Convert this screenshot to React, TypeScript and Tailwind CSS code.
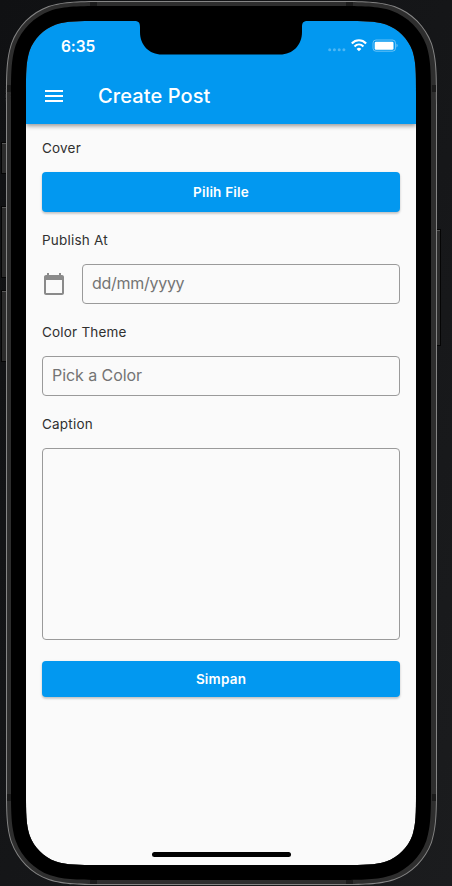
import type { ReactNode } from 'react';

/** Rounded rectangle with continuous (iOS style) corners. */
function squircle(x: number, y: number, w: number, h: number, r: number): string {
  const R = x + w;
  const B = y + h;
  const a = 1.528665 * r;
  const b = 1.088493 * r;
  const c = 0.868407 * r;
  const d = 0.631494 * r;
  const e = 0.074911 * r;
  const f = 0.372824 * r;
  const g = 0.169059 * r;
  return [
    `M${x + a} ${y}H${R - a}`,
    `C${R - b} ${y} ${R - c} ${y} ${R - d} ${y + e}`,
    `C${R - f} ${y + g} ${R - g} ${y + f} ${R - e} ${y + d}`,
    `C${R} ${y + c} ${R} ${y + b} ${R} ${y + a}`,
    `V${B - a}`,
    `C${R} ${B - b} ${R} ${B - c} ${R - e} ${B - d}`,
    `C${R - g} ${B - f} ${R - f} ${B - g} ${R - d} ${B - e}`,
    `C${R - c} ${B} ${R - b} ${B} ${R - a} ${B}`,
    `H${x + a}`,
    `C${x + b} ${B} ${x + c} ${B} ${x + d} ${B - e}`,
    `C${x + f} ${B - g} ${x + g} ${B - f} ${x + e} ${B - d}`,
    `C${x} ${B - c} ${x} ${B - b} ${x} ${B - a}`,
    `V${y + a}`,
    `C${x} ${y + b} ${x} ${y + c} ${x + e} ${y + d}`,
    `C${x + g} ${y + f} ${x + f} ${y + g} ${x + d} ${y + e}`,
    `C${x + c} ${y} ${x + b} ${y} ${x + a} ${y}Z`,
  ].join('');
}

const SCREEN = squircle(26, 21, 390, 844, 47.3);
const GLASS = squircle(11, 6, 420, 874, 62.3);
const RIM = squircle(7, 2, 429, 882, 66.3);
const EDGE = squircle(6, 1, 431, 884, 67.3);

function DeviceFrame() {
  return (
    <svg className="pointer-events-none absolute inset-0" width="452" height="886" viewBox="0 0 452 886" aria-hidden="true">
      <g fill="#2b2b2b" stroke="#050505" strokeWidth="1">
        <rect x="1.5" y="142.5" width="6" height="31" />
        <rect x="1.5" y="206.5" width="6" height="71" />
        <rect x="1.5" y="290.5" width="6" height="71" />
        <rect x="435.5" y="229.5" width="5" height="116" />
      </g>
      <path d="M2 143.5H6M2 207.5H6M2 291.5H6M437 230.5H440" stroke="#555" />
      <path d={EDGE + SCREEN} fill="#858585" fillRule="evenodd" />
      <path d={RIM + SCREEN} fill="#2e2e2e" fillRule="evenodd" />
      <path d="M90 2h7v4h-7zM346 2h7v4h-7zM90 880h7v4h-7zM346 880h7v4h-7zM7 85h4v7H7zM432 85h4v7h-4zM7 794h4v7H7zM432 794h4v7h-4z" fill="#1b1b1b" />
      <path d={GLASS + SCREEN} fill="#000" fillRule="evenodd" />
      <path d="M134 20.500V21C138.500 21 140 22.500 140 27V32C140 45 149 54.500 162 54.500H280C293 54.500 302 45 302 32V27C302 22.500 303.500 21 308 21V20.500Z" fill="#000" />
    </svg>
  );
}

function StatusBar() {
  return (
    <div className="flex h-[47px] items-start justify-between pl-[35px] pr-[18px]">
      <span className="mt-[16px] text-[15.500px] leading-5 font-semibold tracking-[-0.100px]">6:35</span>
      <div className="mt-[17px] flex items-center">
        <svg width="18" height="16" viewBox="0 0 18 16" fill="#fff" fillOpacity="0.3">
          <circle cx="1.700" cy="11.700" r="1.500" />
          <circle cx="6.400" cy="11.700" r="1.500" />
          <circle cx="11.200" cy="11.700" r="1.500" />
          <circle cx="15.900" cy="11.700" r="1.500" />
        </svg>
        <svg className="ml-[5px]" width="17" height="16" viewBox="0 0 17 16" fill="none" stroke="#fff">
          <path d="M0.800 5.400C4.900 1.200 11 1.200 15.100 5.400" strokeWidth="2.200" />
          <path d="M3.500 8.400C6.100 5.800 9.800 5.800 12.400 8.400" strokeWidth="2.100" />
          <path d="M7.950 13.300L5.600 10.900C7 9.500 8.900 9.500 10.300 10.900Z" fill="#fff" stroke="none" />
        </svg>
        <svg className="ml-[4px]" width="26" height="16" viewBox="0 0 26 16">
          <rect x="1" y="2" width="22.500" height="11.200" rx="3" fill="none" stroke="#fff" strokeOpacity="0.4" />
          <rect x="2.700" y="3.700" width="18.800" height="8" rx="1.300" fill="#fff" />
          <path d="M24.500 5.800C26 6.400 26 8.800 24.500 9.400Z" fill="#fff" fillOpacity="0.45" />
        </svg>
      </div>
    </div>
  );
}

function Label({ children }: { children: ReactNode }) {
  return <label className="block h-4 text-[13.500px] leading-4 tracking-[0.200px] text-[#303030]">{children}</label>;
}

const BUTTON =
  'flex w-full items-center justify-center rounded-[4px] bg-[#0298f0] text-[13.500px] font-semibold tracking-[0.200px] text-white shadow-[0_2px_2px_rgba(0,0,0,0.12),0_1px_3px_rgba(0,0,0,0.14)]';
const FIELD =
  'block w-full min-w-0 rounded-[4px] border border-[#9a9a9a] bg-transparent px-[9px] pb-[2px] text-[16px] outline-none placeholder:text-[#747474]';

export default function App() {
  return (
    <div className="relative h-[886px] w-[452px] overflow-hidden bg-linear-to-br from-[#101113] via-[#151618] to-[#1b1c1e] pt-[21px] pl-[26px] font-['Inter',sans-serif]">
      <main className="flex h-[844px] w-[390px] flex-col bg-[#fafafa]">
        <header className="h-[103px] shrink-0 bg-[#0298f0] text-white shadow-[0_2px_4px_rgba(0,0,0,0.3),0_1px_6px_rgba(0,0,0,0.15)]">
          <StatusBar />
          <div className="flex h-14 items-center pl-[19px]">
            <button className="flex h-3 w-[18px] flex-col justify-between" aria-label="Menu">
              <span className="h-[2px] w-full bg-white" />
              <span className="h-[2px] w-full bg-white" />
              <span className="h-[2px] w-full bg-white" />
            </button>
            <h1 className="ml-[35px] text-[20px] leading-6 font-medium tracking-[0.100px]">Create Post</h1>
          </div>
        </header>

        <form className="flex flex-col px-4 pt-4">
          <Label>Cover</Label>
          <button type="button" className={`${BUTTON} mt-4 h-10`}>Pilih File</button>

          <div className="mt-5">
            <Label>Publish At</Label>
          </div>
          <div className="mt-4 flex items-center gap-4">
            <svg className="shrink-0" width="24" height="24" viewBox="0 0 24 24" fill="#8a8a8a" aria-hidden="true">
              <path d="M20 3h-1V1h-2v2H7V1H5v2H4c-1.100 0-2 .9-2 2v16c0 1.100.9 2 2 2h16c1.100 0 2-.9 2-2V5c0-1.100-.9-2-2-2zm0 18H4V8h16v13z" />
            </svg>
            <input className={`${FIELD} h-10 tracking-[-0.280px]`} placeholder="dd/mm/yyyy" />
          </div>

          <div className="mt-5">
            <Label>Color Theme</Label>
          </div>
          <input className={`${FIELD} mt-4 h-10 tracking-[-0.060px]`} placeholder="Pick a Color" />

          <div className="mt-5">
            <Label>Caption</Label>
          </div>
          <textarea className={`${FIELD} mt-4 h-48 resize-none`} />

          <button type="button" className={`${BUTTON} mt-[21px] h-9`}>Simpan</button>
        </form>

        <div className="mt-auto mb-2 h-[5px] w-[139px] self-center rounded-full bg-black" />
      </main>
      <DeviceFrame />
    </div>
  );
}
